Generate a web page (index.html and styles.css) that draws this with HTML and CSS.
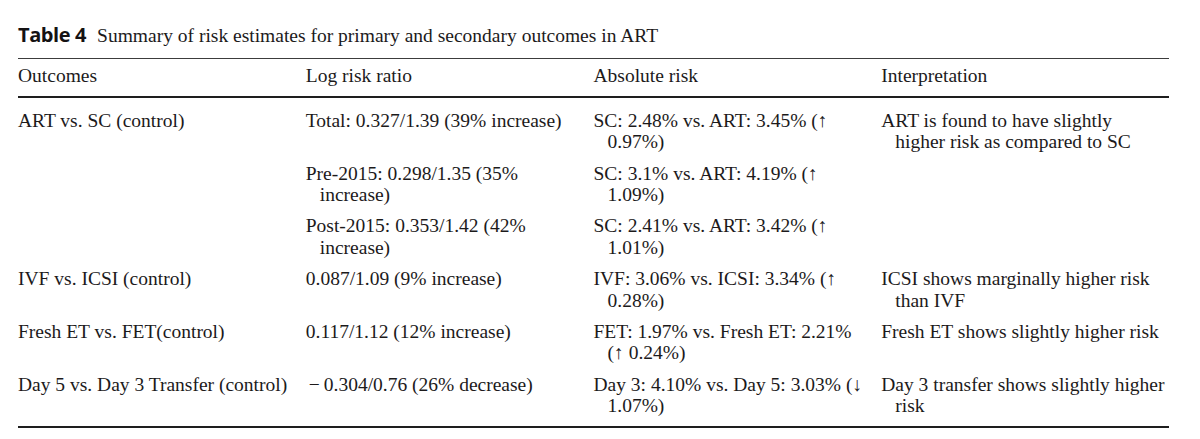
FILE: index.html
```html
<!DOCTYPE html>
<html lang="en">
<head>
<meta charset="utf-8">
<title>Table 4</title>
<link rel="stylesheet" href="styles.css">
</head>
<body>
<div class="page">
  <div class="caption"><span class="label">Table 4</span><span class="caption-text">Summary of risk estimates for primary and secondary outcomes in ART</span></div>
  <table class="risk">
    <colgroup><col class="c"><col class="c"><col class="c"><col class="c"></colgroup>
    <thead>
      <tr><th>Outcomes</th><th>Log risk ratio</th><th>Absolute risk</th><th>Interpretation</th></tr>
    </thead>
    <tbody>
      <tr class="first">
        <td>ART vs. SC (control)</td>
        <td>Total: 0.327/1.39 (39% increase)</td>
        <td>SC: 2.48% vs. ART: 3.45% <span class="dir">(↑</span> 0.97%)</td>
        <td>ART is found to have slightly higher risk as compared to SC</td>
      </tr>
      <tr>
        <td></td>
        <td>Pre-2015: 0.298/1.35 (35% increase)</td>
        <td>SC: 3.1% vs. ART: 4.19% <span class="dir">(↑</span> 1.09%)</td>
        <td></td>
      </tr>
      <tr>
        <td></td>
        <td>Post-2015: 0.353/1.42 (42% increase)</td>
        <td>SC: 2.41% vs. ART: 3.42% <span class="dir">(↑</span> 1.01%)</td>
        <td></td>
      </tr>
      <tr>
        <td>IVF vs. ICSI (control)</td>
        <td>0.087/1.09 (9% increase)</td>
        <td>IVF: 3.06% vs. ICSI: 3.34% <span class="dir">(↑</span> 0.28%)</td>
        <td>ICSI shows marginally higher risk than IVF</td>
      </tr>
      <tr>
        <td>Fresh ET vs. FET(control)</td>
        <td>0.117/1.12 (12% increase)</td>
        <td>FET: 1.97% vs. Fresh ET: 2.21% <span class="dir">(↑</span> 0.24%)</td>
        <td>Fresh ET shows slightly higher risk</td>
      </tr>
      <tr class="last">
        <td>Day 5 vs. Day 3 Transfer (control)</td>
        <td><span class="minus">−</span>0.304/0.76 (26% decrease)</td>
        <td>Day 3: 4.10% vs. Day 5: 3.03% <span class="dir">(↓</span> 1.07%)</td>
        <td>Day 3 transfer shows slightly higher risk</td>
      </tr>
    </tbody>
  </table>
</div>
</body>
</html>
```

FILE: styles.css
```css
html, body {
  margin: 0;
  padding: 0;
  background: #ffffff;
}

.page {
  padding: 24px 0 0 18px;
  color: #1c1a1b;
  font-family: "Liberation Serif", "Times New Roman", serif;
  font-size: 19.5px;
  line-height: 21.4px;
}

.caption {
  display: flex;
  align-items: baseline;
  gap: 11px;
  margin-bottom: 12px;
}

.label {
  font-family: "Open Sans", "Liberation Sans", sans-serif;
  font-weight: 700;
  font-size: 20px;
  letter-spacing: -0.4px;
  color: #141213;
}

.risk {
  width: 1151px;
  table-layout: fixed;
  border-collapse: collapse;
  border-top: 1.5px solid #3c3c3c;
  border-bottom: 2px solid #1e1e1e;
}

.risk .c {
  width: 25%;
}

.risk th {
  font-weight: normal;
  text-align: left;
  padding: 6px 11px 9px 0;
  border-bottom: 2px solid #1e1e1e;
  vertical-align: top;
}

.risk td {
  padding: 5px 11px 5px 14px;
  text-indent: -14px;
  vertical-align: top;
  text-align: left;
}

.risk th:last-child,
.risk td:last-child {
  padding-right: 3px;
}

.risk tr.first td {
  padding-top: 12px;
}

.risk tr.last td {
  padding-bottom: 9px;
}

.dir {
  white-space: nowrap;
}

.minus {
  display: inline-block;
  text-indent: 0;
  margin: 0 4px 0 3px;
}
```
